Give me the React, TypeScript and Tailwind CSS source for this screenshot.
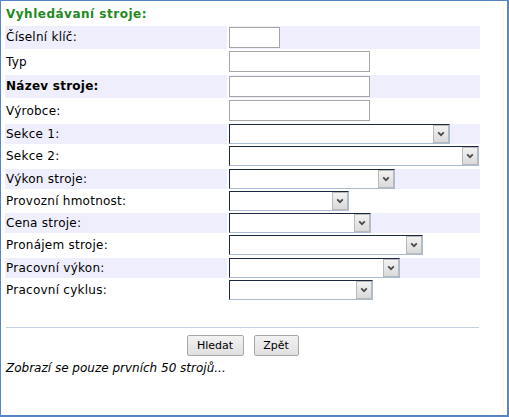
import React from "react";

function Chevron() {
  return (
    <svg width="8" height="6" viewBox="0 0 8 6">
      <path d="M1.2 1.3 L4 4.2 L6.8 1.3" fill="none" stroke="#4a4a4a" strokeWidth="1.7" />
    </svg>
  );
}

function Sel({ cls }: { cls: string }) {
  return (
    <div
      className={
        "h-[20px] flex items-stretch justify-end bg-white border border-t-[#1c2a40] border-l-[#1c2a40] border-r-[#a9bcd2] border-b-[#a9bcd2] " +
        cls
      }
    >
      <div className="w-[16px] my-[0px] flex items-center justify-center border border-[#b9b9b9] bg-gradient-to-b from-[#f2f2f2] to-[#dadada]">
        <Chevron />
      </div>
    </div>
  );
}

function Inp({ cls }: { cls: string }) {
  return <div className={"h-[21px] bg-white border border-[#a6a6a6] " + cls} />;
}

const textRows: { label: string; bold?: boolean; band: boolean; w: string }[] = [
  { label: "Číselní klíč:", band: true, w: "w-[51px]" },
  { label: "Typ", band: false, w: "w-[141px]" },
  { label: "Název stroje:", bold: true, band: true, w: "w-[141px]" },
  { label: "Výrobce:", band: false, w: "w-[141px]" },
];

const selRows: { label: string; band: boolean; w: string }[] = [
  { label: "Sekce 1:", band: true, w: "w-[221px]" },
  { label: "Sekce 2:", band: false, w: "w-[250px]" },
  { label: "Výkon stroje:", band: true, w: "w-[166px]" },
  { label: "Provozní hmotnost:", band: false, w: "w-[120px]" },
  { label: "Cena stroje:", band: true, w: "w-[142px]" },
  { label: "Pronájem stroje:", band: false, w: "w-[194px]" },
  { label: "Pracovní výkon:", band: true, w: "w-[171px]" },
  { label: "Pracovní cyklus:", band: false, w: "w-[144px]" },
];

export default function App() {
  return (
    <div className="w-[509px] h-[417px] bg-white border-l border-t border-r-2 border-b-2 border-[#5a85c4] font-['DejaVu_Sans',sans-serif] text-[12px] leading-[14px] text-black overflow-hidden">
      <div className="w-[503px] h-full border-r border-[#fbf8e2] pl-[4px] pt-[6px]">
        <div className="pl-[1px] font-bold text-[#1e8a1e] tracking-[0.5px]">Vyhledávaní stroje:</div>
        <div className="mt-[5px] w-[475px] flex flex-col gap-[2px]">
          {textRows.map((r) => (
            <div key={r.label} className="h-[22.5px] flex gap-[2px]">
              <div
                className={
                  "w-[222px] pl-[1px] flex items-center tracking-[0.25px] " +
                  (r.band ? "bg-[#eeeefc] " : "") +
                  (r.bold ? "font-bold tracking-[0.4px]" : "")
                }
              >
                {r.label}
              </div>
              <div className={"flex-1 flex items-center " + (r.band ? "bg-[#eeeefc]" : "")}>
                <Inp cls={r.w} />
              </div>
            </div>
          ))}
          {selRows.map((r) => (
            <div key={r.label} className="h-[20.25px] flex gap-[2px]">
              <div
                className={
                  "w-[222px] pl-[1px] flex items-center tracking-[0.25px] " + (r.band ? "bg-[#eeeefc]" : "")
                }
              >
                {r.label}
              </div>
              <div className={"flex-1 flex items-center " + (r.band ? "bg-[#eeeefc]" : "")}>
                <Sel cls={r.w} />
              </div>
            </div>
          ))}
        </div>
        <div className="mt-[27px] ml-[1px] w-[473px] border-t border-[#c3d2e2]" />
        <div className="mt-[7px] w-[475px] flex justify-center gap-[10px]">
          <button className="w-[57px] h-[21px] border border-[#a9a9a9] rounded-[2px] bg-gradient-to-b from-[#f2f2f2] to-[#e0e0e0] text-[11px] leading-[14px] text-black">
            Hledat
          </button>
          <button className="w-[45px] h-[21px] border border-[#a9a9a9] rounded-[2px] bg-gradient-to-b from-[#f2f2f2] to-[#e0e0e0] text-[11px] leading-[14px] text-black">
            Zpět
          </button>
        </div>
        <div className="mt-[5px] pl-[1px] italic">Zobrazí se pouze prvních 50 strojů...</div>
      </div>
    </div>
  );
}
